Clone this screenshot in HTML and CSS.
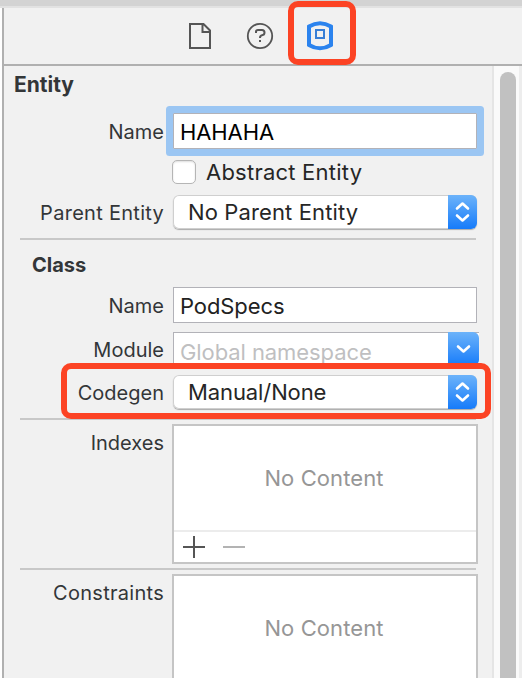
FILE: index.html
```html
<!DOCTYPE html>
<html lang="en">
<head>
<meta charset="utf-8">
<title>Entity Inspector</title>
<link rel="stylesheet" href="styles.css">
</head>
<body>
<div class="window-edge"></div>
<main class="inspector">
  <nav class="tabs">
    <svg class="tab" width="30" height="34" viewBox="0 0 30 34"><path d="M5 5H18.5L25 11.5V29H5Z M17.5 6V13H24" fill="none" stroke="#555" stroke-width="2"/></svg>
    <svg class="tab" width="30" height="34" viewBox="0 0 30 34"><circle cx="15" cy="17" r="12.2" fill="none" stroke="#555" stroke-width="1.8"/><path d="M11 14V12.5Q11 11 13 11H17Q19.5 11 19.5 13.5T17 16.2Q15 16.5 15 19" fill="none" stroke="#555" stroke-width="2"/><path d="M14 21h2v2h-2z" fill="#555"/></svg>
    <div class="tab-marked">
      <svg width="30" height="34" viewBox="0 0 30 34"><path d="M4 8.5Q15 1.8 26 8.5V27Q15 33.7 4 27Z" fill="none" stroke="#2b83ee" stroke-width="4"/><path d="M11 12h8v8h-8z" fill="none" stroke="#387fd6" stroke-width="2"/></svg>
    </div>
  </nav>
  <div class="body">
    <form class="form">
      <h1>Entity</h1>
      <div class="row row-name"><label>Name</label><div class="field focused">HAHAHA</div></div>
      <div class="row row-check"><span></span><div class="check"><i class="box"></i><span>Abstract Entity</span></div></div>
      <div class="row row-parent"><label class="wide">Parent Entity</label>
        <div class="popup"><span>No Parent Entity</span><b class="stepper"><svg width="29" height="34" viewBox="0 0 29 34"><path d="M9 13.5 14.5 8.5l5.5 5M9 20.5l5.5 5 5.5-5"/></svg></b></div></div>
      <hr>
      <h2>Class</h2>
      <div class="row row-class"><label>Name</label><div class="field">PodSpecs</div></div>
      <div class="row row-module"><label>Module</label>
        <div class="combo"><span>Global namespace</span><b class="stepper"><svg width="31" height="34" viewBox="0 0 31 34"><path d="M10 14.5l5.5 5 5.5-5"/></svg></b></div></div>
      <div class="row row-codegen"><label>Codegen</label>
        <div class="popup tight"><span>Manual/None</span><b class="stepper"><svg width="29" height="34" viewBox="0 0 29 34"><path d="M9 13.5 14.5 8.5l5.5 5M9 20.5l5.5 5 5.5-5"/></svg></b></div>
        <div class="mark"></div></div>
      <hr>
      <div class="row row-list"><label>Indexes</label>
        <div class="list"><div class="empty">No Content</div><div class="actions">
          <svg width="62" height="24" viewBox="0 0 62 24"><path d="M0 12H22M11 1V23" stroke="#555" stroke-width="2"/><path d="M40 12H62" stroke="#b3b3b3" stroke-width="2"/></svg>
        </div></div></div>
      <hr>
      <div class="row row-list"><label class="wide">Constraints</label>
        <div class="list"><div class="empty">No Content</div></div></div>
    </form>
    <aside class="scrollbar"><div class="thumb"></div></aside>
  </div>
</main>
</body>
</html>
```
FILE: styles.css
```css
* { box-sizing: border-box; }
body {
  margin: 0;
  height: 678px;
  overflow: hidden;
  background: #fff;
  color: #262626;
  font: 22px/30px Inter, "Liberation Sans", sans-serif;
}
svg { display: block; }
.window-edge { height: 8px; background: #d3d3d3; border-bottom: 2px solid #e2e2e2; }
.inspector {
  height: 670px;
  margin-left: 2px;
  border-left: 2px solid #b0b0b0;
  background: #f1f1f1;
}
.tabs {
  height: 58px;
  display: flex;
  align-items: center;
  gap: 30px;
  padding-left: 181px;
  border-bottom: 2px solid #b0b0b0;
}
.tab { flex: none; }
.tab-marked {
  width: 68px;
  height: 64px;
  margin: -4px 0 0 -17px;
  padding: 11px 0 0 11px;
  border: 6px solid #fc4324;
  border-radius: 10px;
  position: relative;
  top: -1px;
}
.body { height: 612px; display: flex; }
.form { width: 488px; height: 612px; overflow: hidden; }
h1, h2 { margin: 0; font-size: 21px; font-weight: 700; line-height: 30px; color: #333638; }
h1 { height: 40px; padding: 4px 0 0 10px; }
h2 { height: 47px; padding: 10px 0 0 28px; font-size: 20px; }
hr { width: 456px; height: 2px; margin: 0 0 0 16px; border: 0; background: #c8c8c8; }
.row { display: grid; grid-template-columns: 160px 306px; column-gap: 8px; align-items: center; position: relative; }
label { padding-top: 2px; text-align: right; font-size: 20px; color: #333638; }
.wide { letter-spacing: 0.28px; }
.field { width: 304px; height: 36px; margin-left: 1px; padding: 3px 6px 0; line-height: 30px; letter-spacing: -0.1px; background: #fff; border: 1px solid #b2b2b8; color: #222; }
.focused { box-shadow: 0 0 0 7px #9bc6f3; border-radius: 1px; color: #000; }
.row-name { height: 50px; }
.row-check { height: 32px; }
.check { display: flex; align-items: center; gap: 10px; letter-spacing: 0.23px; }
.box { width: 24px; height: 24px; background: #fff; border: 1px solid #b5b5b5; border-radius: 5px; box-shadow: inset 0 1px 2px #ddd; }
.row-parent { height: 50px; padding-bottom: 2px; }
.popup { display: flex; justify-content: space-between; align-items: center; width: 304px; height: 34px; margin-left: 1px; padding-left: 15px; letter-spacing: 0.12px; background: #fff; border-radius: 6px; box-shadow: inset 0 0 0 1px #cfcfcf, 0 1px 1px #aaa; }
.tight { letter-spacing: -0.1px; }
.stepper { height: 34px; background: linear-gradient(#6cb3fa, #167bfa); border-radius: 0 6px 6px 0; }
.stepper path { fill: none; stroke: #fff; stroke-width: 2.6; stroke-linecap: round; stroke-linejoin: round; }
.row-class { height: 36px; }
.row-module { height: 34px; margin-top: 9px; }
.combo { display: flex; justify-content: space-between; width: 306px; height: 34px; margin-left: 1px; padding-left: 6px; letter-spacing: -0.08px; background: #fff; border-top: 1px solid #b2b2b8; border-left: 1px solid #b2b2b8; color: #bfbfc1; }
.combo span { padding-top: 4px; }
.combo .stepper { margin-top: -1px; }
.row-codegen { height: 34px; margin: 9px 0; }
.mark { position: absolute; left: 57px; top: -12px; width: 430px; height: 56px; border: 6px solid #fc4324; border-radius: 10px; }
.row-list { align-items: start; margin: 4px 0; }
.row-list label { padding-top: 4px; }
.list { height: 140px; background: #fff; border: 2px solid #c5c5c5; }
.empty { height: 104px; display: flex; align-items: center; justify-content: center; padding-right: 2px; color: #969696; letter-spacing: 0.1px; }
.actions { height: 32px; padding: 3px 0 0 9px; border-top: 2px solid #ececec; }
.scrollbar {
  flex: 1;
  height: 612px;
  overflow: hidden;
  padding: 6px 0 0 6px;
  background: linear-gradient(90deg, #fafafa 25px, #ededed 25px);
  border-left: 2px solid #e5e5e5;
}
.thumb { width: 16px; height: 700px; background: #c1c1c1; border-radius: 8px; }
```
